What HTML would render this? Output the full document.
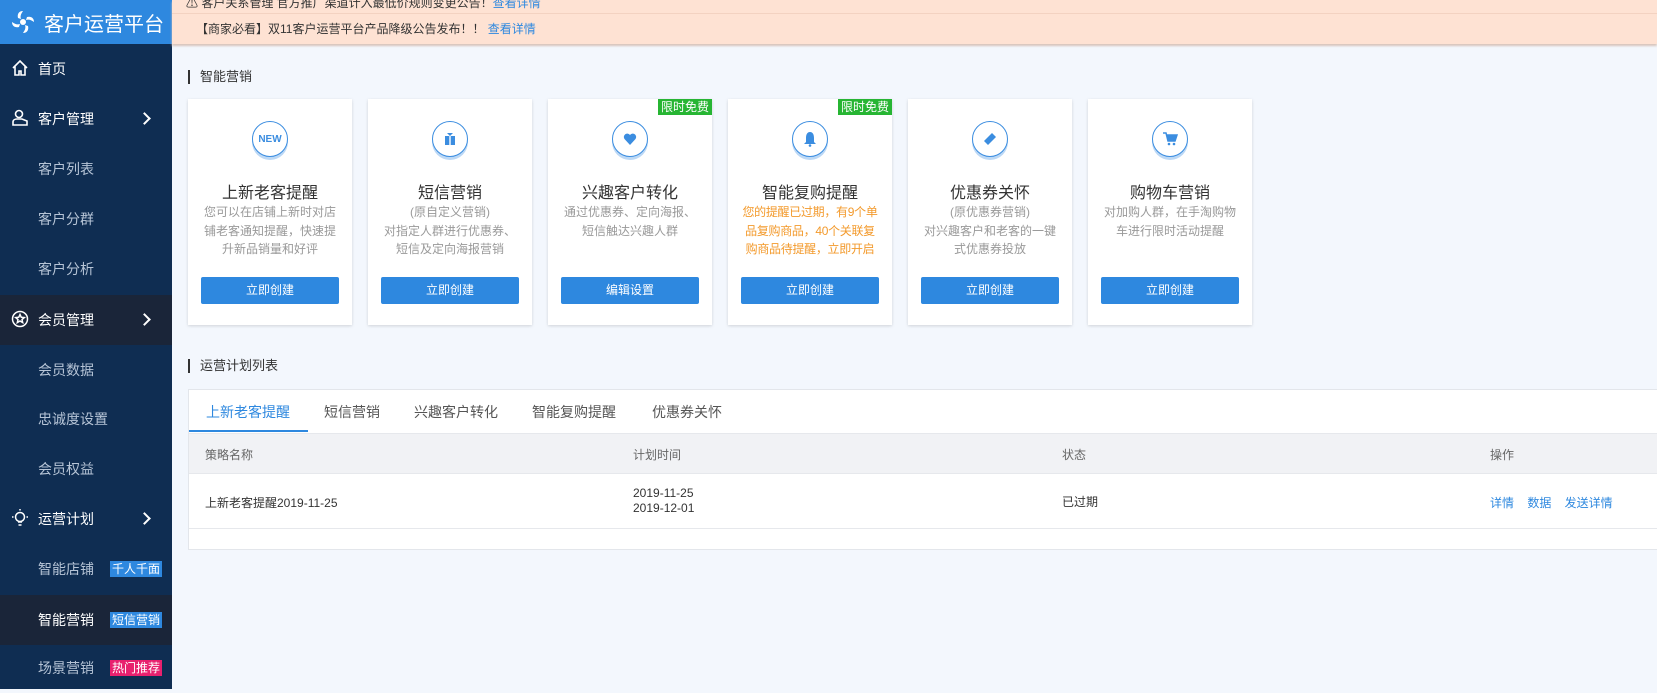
<!DOCTYPE html>
<html><head><meta charset="utf-8"><style>
*{margin:0;padding:0;box-sizing:border-box}
body{width:1657px;height:689px;overflow:hidden;background:#f3f7fd;font-family:"Liberation Sans","Noto Sans CJK SC",sans-serif;position:relative;color:#333}
.side{position:absolute;left:0;top:0;width:172px;height:689px;background:#0f2d52}
.logo{height:44px;background:#2e88df;color:#fff;font-size:20px;display:flex;align-items:center;padding-left:10px}
.logo svg{margin-right:8px}
.it{position:absolute;left:0;width:172px;height:50px;display:flex;align-items:center;color:#b6c4d6;font-size:14px;padding-left:38px}
.it.main{color:#fff;font-size:14px}
.it .ic{position:absolute;left:11px;top:15px}
.it .ar{position:absolute;left:140px;top:20px;width:9px;height:9px;border-right:2px solid #fff;border-top:2px solid #fff;transform:rotate(45deg)}
.tag{margin-left:16px;color:#fff;font-size:12px;padding:0 2px;line-height:16px}
.notice{position:absolute;left:172px;top:0;right:0;height:44px;background:#fee2d3;box-shadow:0 2px 2px #d8c5bb}
.notice .l1{position:absolute;top:0;left:0;right:0;height:14px;border-bottom:1px solid #f3d2c1;overflow:hidden}
.notice .l2{position:absolute;top:20px;left:24px;font-size:12px;color:#333}
a{color:#2e88df;text-decoration:none}
.sec{position:absolute;left:188px;font-size:13px;color:#333;border-left:2px solid #333;padding-left:10px;line-height:14px}
.card{position:absolute;top:99px;width:164px;height:226px;background:#fff;box-shadow:0 1px 3px rgba(0,0,0,.15);text-align:center}
.circ{position:absolute;left:64px;top:22px;width:36px;height:36px;border-radius:50%;border:1.5px solid #3b8de0;background:#fff;box-shadow:0 3px 0 #bcd8f5;display:flex;align-items:center;justify-content:center}
.card h3{position:absolute;top:80px;left:0;right:0;font-weight:normal;font-size:16px;color:#333}
.card p{position:absolute;top:104px;left:0;right:0;font-size:12px;line-height:18.5px;color:#999;white-space:nowrap}
.card p.or{color:#f39a2c;letter-spacing:-0.3px}
.btn{position:absolute;left:13px;right:13px;top:178px;height:27px;background:#2e88df;color:#fff;font-size:12px;line-height:27px;border-radius:2px}
.badge{position:absolute;right:0;top:0;width:54px;height:16px;background:#27b533;color:#fff;font-size:12px;line-height:16px}
.tbl{position:absolute;left:188px;top:389px;right:0;height:161px;background:#fff;border:1px solid #e3e6eb;border-right:none}
.tab{position:absolute;top:12px;font-size:14px;color:#555}
.hd{position:absolute;top:43px;left:0;right:0;height:41px;background:#f1f2f5;border-top:1px solid #e6e8ec;border-bottom:1px solid #e6e8ec;font-size:12px;color:#666}
.rw{position:absolute;top:84px;left:0;right:0;height:55px;border-bottom:1px solid #e6e8ec;font-size:12px;color:#333}
.c{position:absolute}
</style></head><body>
<div class="side">
 <div class="logo"><svg width="26" height="26" viewBox="0 0 26 26" fill="#fff"><circle cx="13" cy="13" r="3"/><path d="M13 2c-4 0-6 3-5 7l3 1c-1-3 0-5 2-8z"/><path d="M24 13c0-4-3-6-7-5l-1 3c3-1 5 0 8 2z"/><path d="M13 24c4 0 6-3 5-7l-3-1c1 3 0 5-2 8z"/><path d="M2 13c0 4 3 6 7 5l1-3c-3 1-5 0-8-2z"/></svg>客户运营平台</div>
 <div class="it main" style="top:44px"><svg class="ic" width="18" height="18" viewBox="0 0 18 18" fill="none" stroke="#fff" stroke-width="1.6"><path d="M2 9L9 2l7 7M4 7v9h4v-4h2v4h4V7"/></svg>首页</div>
 <div class="it main" style="top:94px"><svg class="ic" width="18" height="18" viewBox="0 0 18 18" fill="none" stroke="#fff" stroke-width="1.6"><circle cx="8" cy="5" r="3.5"/><path d="M2 16v-3c0-2 2-3 4-3h5l5 2v4z"/></svg>客户管理<span class="ar"></span></div>
 <div class="it" style="top:144px">客户列表</div>
 <div class="it" style="top:194px">客户分群</div>
 <div class="it" style="top:244px">客户分析</div>
 <div class="it main" style="top:295px;background:#1a2539"><svg class="ic" width="18" height="18" viewBox="0 0 18 18" fill="none" stroke="#fff" stroke-width="1.5"><circle cx="9" cy="9" r="7.5"/><path d="M9 4.5l1.3 2.8 3 .3-2.3 2 .7 3L9 11l-2.7 1.6.7-3-2.3-2 3-.3z"/></svg>会员管理<span class="ar"></span></div>
 <div class="it" style="top:345px">会员数据</div>
 <div class="it" style="top:394px">忠诚度设置</div>
 <div class="it" style="top:444px">会员权益</div>
 <div class="it main" style="top:494px"><svg class="ic" width="18" height="18" viewBox="0 0 18 18" fill="none" stroke="#fff" stroke-width="1.5"><circle cx="9" cy="8" r="4.5"/><path d="M7 13h4M7.5 16h3M9 0v1.5M1 8h1.5M15.5 8H17"/></svg>运营计划<span class="ar"></span></div>
 <div class="it" style="top:544px">智能店铺<span class="tag" style="background:#2e88df">千人千面</span></div>
 <div class="it main" style="top:595px;background:#1a2539">智能营销<span class="tag" style="background:#2e88df">短信营销</span></div>
 <div class="it" style="top:643px">场景营销<span class="tag" style="background:#e8206e">热门推荐</span></div>
</div>
<div class="notice">
 <div class="l1"><span style="position:absolute;left:14px;top:-6px;font-size:12px;color:#333">⚠ 客户关系管理 官方推广渠道计入最低价规则变更公告！<a>查看详情</a></span></div>
 <div class="l2">【商家必看】双11客户运营平台产品降级公告发布！！ <a>查看详情</a></div>
</div>
<div class="sec" style="top:70px">智能营销</div>

<div class="card" style="left:188px"><div class="circ"><span style="color:#3b8de0;font-size:10px;font-weight:bold">NEW</span></div><h3>上新老客提醒</h3><p>您可以在店铺上新时对店<br>铺老客通知提醒，快速提<br>升新品销量和好评</p><div class="btn">立即创建</div></div>
<div class="card" style="left:368px"><div class="circ"><svg width="14" height="14" viewBox="0 0 14 14" fill="#3b8de0"><rect x="2" y="4" width="10" height="9"/><path d="M4 1l3 3 3-3z"/><rect x="6.3" y="4" width="1.4" height="9" fill="#fff"/></svg></div><h3>短信营销</h3><p>(原自定义营销)<br>对指定人群进行优惠券、<br>短信及定向海报营销</p><div class="btn">立即创建</div></div>
<div class="card" style="left:548px"><div class="badge">限时免费</div><div class="circ"><svg width="14" height="14" viewBox="0 0 14 14" fill="#3b8de0"><path d="M7 13L1.5 7A3.2 3.2 0 017 3a3.2 3.2 0 015.5 4z"/></svg></div><h3>兴趣客户转化</h3><p>通过优惠券、定向海报、<br>短信触达兴趣人群</p><div class="btn">编辑设置</div></div>
<div class="card" style="left:728px"><div class="badge">限时免费</div><div class="circ"><svg width="14" height="16" viewBox="0 0 14 16" fill="#3b8de0"><path d="M7 1c-3 0-4 3-4 6v4l-2 2h12l-2-2V7c0-3-1-6-4-6z"/><circle cx="7" cy="14.5" r="1.3"/></svg></div><h3>智能复购提醒</h3><p class="or">您的提醒已过期，有9个单<br>品复购商品，40个关联复<br>购商品待提醒，立即开启</p><div class="btn">立即创建</div></div>
<div class="card" style="left:908px"><div class="circ"><svg width="16" height="16" viewBox="0 0 16 16" fill="#3b8de0"><path d="M2 10l8-8 4 4-8 8z"/></svg></div><h3>优惠券关怀</h3><p>(原优惠券营销)<br>对兴趣客户和老客的一键<br>式优惠券投放</p><div class="btn">立即创建</div></div>
<div class="card" style="left:1088px"><div class="circ"><svg width="16" height="16" viewBox="0 0 16 16" fill="#3b8de0"><path d="M1 2h3l2 8h7l2-6H5" stroke="#3b8de0" stroke-width="1.5" fill="none"/><path d="M5 4h10l-2 6H6z"/><circle cx="7" cy="13" r="1.3"/><circle cx="12" cy="13" r="1.3"/></svg></div><h3>购物车营销</h3><p>对加购人群，在手淘购物<br>车进行限时活动提醒</p><div class="btn">立即创建</div></div>

<div class="sec" style="top:359px">运营计划列表</div>
<div class="tbl">
 <div class="tab" style="left:17px;color:#2e88df">上新老客提醒</div>
 <div style="position:absolute;left:0;top:40px;width:119px;height:2px;background:#2e88df"></div>
 <div class="tab" style="left:135px">短信营销</div>
 <div class="tab" style="left:225px">兴趣客户转化</div>
 <div class="tab" style="left:343px">智能复购提醒</div>
 <div class="tab" style="left:463px">优惠券关怀</div>
 <div class="hd"><span class="c" style="left:16px;top:12px">策略名称</span><span class="c" style="left:444px;top:12px">计划时间</span><span class="c" style="left:873px;top:12px">状态</span><span class="c" style="left:1301px;top:12px">操作</span></div>
 <div class="rw"><span class="c" style="left:16px;top:20px">上新老客提醒2019-11-25</span><span class="c" style="left:444px;top:12px;line-height:15px">2019-11-25<br>2019-12-01</span><span class="c" style="left:873px;top:19px">已过期</span><span class="c" style="left:1301px;top:20px;color:#2e88df">详情&nbsp;&nbsp;&nbsp;&nbsp;数据&nbsp;&nbsp;&nbsp;&nbsp;发送详情</span></div>
</div>
</body></html>
